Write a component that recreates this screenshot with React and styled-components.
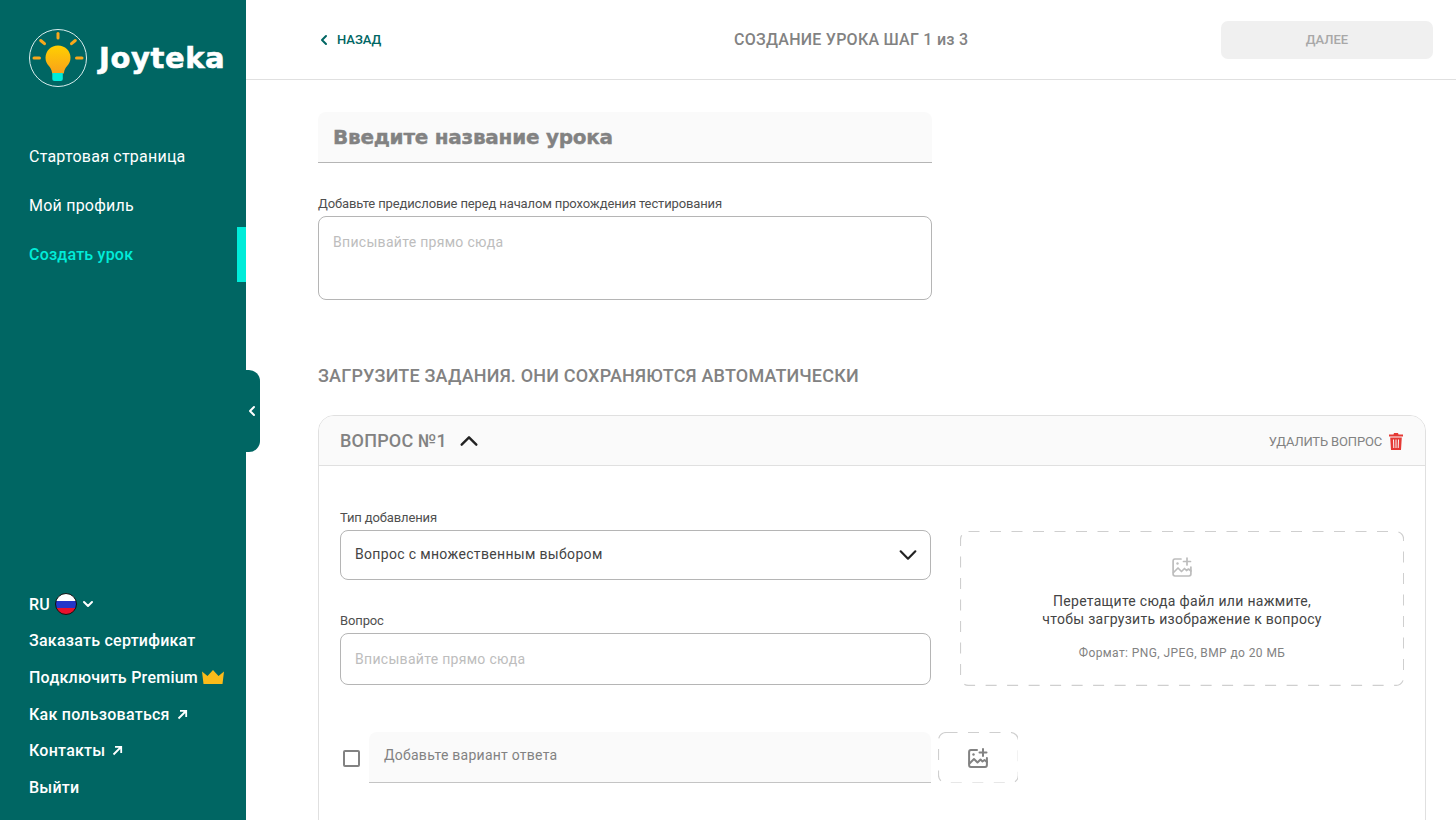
import React from 'react';
import styled, { createGlobalStyle } from 'styled-components';

const Global = createGlobalStyle`
  html, body { margin: 0; padding: 0; height: 100%; overflow: hidden; background: #fff; }
  body { font-family: Roboto, 'Liberation Sans', sans-serif; }
  * { box-sizing: border-box; }
`;

const Page = styled.div`
  display: flex;
  width: 1456px;
  height: 820px;
  overflow: hidden;
`;

const Sidebar = styled.aside`
  position: relative;
  flex: 0 0 246px;
  height: 820px;
  background: #006663;
  display: flex;
  flex-direction: column;
`;

const LogoRow = styled.div`
  display: flex;
  align-items: center;
  gap: 10px;
  padding: 29px 0 0 29px;
  height: 88px;
`;

const LogoText = styled.span`
  font-family: 'DejaVu Sans', sans-serif;
  font-weight: 700;
  font-size: 29px;
  line-height: 32px;
  color: #fff;
  letter-spacing: 0.6px;
  -webkit-text-stroke: 0.6px #fff;
  margin-top: -1px;
`;

const Nav = styled.nav`
  margin-top: 41px;
  display: flex;
  flex-direction: column;
`;

const NavItem = styled.a`
  position: relative;
  display: flex;
  align-items: center;
  height: 55px;
  margin-bottom: -6px;
  padding-left: 29px;
  font-size: 16px;
  letter-spacing: 0.22px;
  font-weight: ${p => (p.$active ? 500 : 400)};
  color: ${p => (p.$active ? '#00ecd9' : '#fff')};
`;

const ActiveBar = styled.span`
  position: absolute;
  right: 0;
  top: 0;
  width: 9px;
  height: 55px;
  background: #00ecd9;
`;

const Toggle = styled.button`
  position: absolute;
  left: 246px;
  top: 370px;
  width: 14px;
  height: 82px;
  padding: 0;
  border: 0;
  border-radius: 0 11px 11px 0;
  background: #006663;
  display: flex;
  align-items: center;
  justify-content: flex-start;
`;

const Bottom = styled.div`
  margin-top: auto;
  padding: 0 0 14.5px 29px;
  display: flex;
  flex-direction: column;
`;

const BottomItem = styled.a`
  display: flex;
  align-items: center;
  height: 36.6px;
  font-size: 16px;
  font-weight: 500;
  letter-spacing: 0.25px;
  color: #fff;
  white-space: nowrap;
`;

const Main = styled.main`
  flex: 1;
  min-width: 0;
  display: flex;
  flex-direction: column;
`;

const TopBar = styled.header`
  position: relative;
  flex: 0 0 80px;
  border-bottom: 1px solid #e0e0e0;
  display: flex;
  align-items: center;
  justify-content: space-between;
  padding: 0 23px 0 72px;
`;

const BackLink = styled.a`
  display: flex;
  align-items: center;
  gap: 7px;
  font-size: 13px;
  font-weight: 500;
  color: #006663;
`;

const StepTitle = styled.div`
  position: absolute;
  left: 488px;
  top: 0;
  line-height: 79px;
  font-size: 16px;
  font-weight: 500;
  color: #828282;
  letter-spacing: 0.25px;
`;

const NextButton = styled.button`
  width: 212px;
  height: 38px;
  margin-top: 1px;
  padding: 0 0 2px;
  border: 0;
  border-radius: 7px;
  background: #f0f0f0;
  color: #a8a8a8;
  font: 500 13px Roboto, sans-serif;
`;

const Content = styled.div`
  padding: 32px 30px 0 72px;
`;

const TitleField = styled.div`
  width: 614px;
  height: 51px;
  background: #fafafa;
  border-bottom: 1px solid #b5b5b5;
  border-radius: 8px 8px 0 0;
  padding-left: 15px;
  display: flex;
  align-items: center;
  font-family: 'DejaVu Sans', sans-serif;
  font-weight: 700;
  font-size: 20px;
  color: #828282;
  letter-spacing: -0.25px;
  -webkit-text-stroke: 0.4px #828282;
`;

const Label = styled.div`
  font-size: 13px;
  line-height: 16px;
  color: #4f4f4f;
  letter-spacing: -0.13px;
  margin-top: ${p => p.$mt || '0'};
`;

const Box = styled.div`
  width: ${p => p.$width || '100%'};
  height: ${p => p.$height};
  margin-top: ${p => p.$mt || '0'};
  border: 1px solid #b5b5b5;
  border-radius: 8px;
  padding: ${p => p.$pad || '0 14px'};
  display: flex;
  align-items: ${p => (p.$top ? 'flex-start' : 'center')};
  justify-content: space-between;
  font-size: 14px;
  color: ${p => (p.$dark ? '#444' : '#bdbdbd')};
  letter-spacing: ${p => (p.$dark ? '0.33px' : '0.3px')};
`;

const SectionTitle = styled.h2`
  margin: 65px 0 0;
  font-size: 18px;
  line-height: 21px;
  font-weight: 500;
  color: #828282;
  letter-spacing: 0.18px;
`;

const Card = styled.section`
  margin-top: 29px;
  width: 1108px;
  height: 480px;
  border: 1px solid #e0e0e0;
  border-radius: 16px;
  overflow: hidden;
`;

const CardHead = styled.div`
  height: 50px;
  background: #fafafa;
  border-bottom: 1px solid #e0e0e0;
  display: flex;
  align-items: center;
  padding: 0 22px 0 21px;
`;

const QuestionTitle = styled.div`
  font-size: 18px;
  font-weight: 500;
  color: #828282;
  letter-spacing: 0.2px;
  margin-right: 11px;
`;

const DeleteBtn = styled.div`
  margin-left: auto;
  padding-top: 1px;
  display: flex;
  align-items: center;
  gap: 7px;
  font-size: 13px;
  color: #828282;
  letter-spacing: -0.17px;
`;

const CardBody = styled.div`
  padding: 44px 21px 0;
`;

const FormGrid = styled.div`
  display: grid;
  grid-template-columns: 591px 444px;
  column-gap: 29px;
`;

const FieldColumn = styled.div`
  display: flex;
  flex-direction: column;
`;

const DropZone = styled.div`
  margin-top: 21px;
  height: 155px;
  border-radius: 8px;
  display: flex;
  flex-direction: column;
  align-items: center;
  position: relative;
  padding-top: 26px;
`;

const DashedFrame = styled.svg`
  position: absolute;
  inset: 0;
  width: 100%;
  height: 100%;
`;

const DropText = styled.div`
  margin-top: 15px;
  font-size: 14px;
  line-height: 18px;
  color: #444;
  text-align: center;
  letter-spacing: 0.3px;
`;

const DropHint = styled.div`
  margin-top: 18px;
  font-size: 12px;
  line-height: 14px;
  color: #828282;
  letter-spacing: 0.4px;
`;

const AnswerRow = styled.div`
  margin-top: 46px;
  display: flex;
  align-items: center;
`;

const CheckBox = styled.span`
  width: 17px;
  height: 17px;
  margin: 1px 9px 0 3px;
  border: 2px solid #828282;
  border-radius: 2px;
`;

const AnswerField = styled.div`
  width: 562px;
  height: 51px;
  background: #fafafa;
  border-bottom: 1px solid #c4c4c4;
  border-radius: 8px 8px 0 0;
  padding: 0 15px 4px;
  display: flex;
  align-items: center;
  font-size: 14px;
  color: #828282;
  letter-spacing: 0.25px;
`;

const AddImage = styled.div`
  position: relative;
  width: 80px;
  height: 51px;
  margin-left: 7px;
  display: flex;
  align-items: center;
  justify-content: center;
`;

const SelectArrow = styled.span`
  display: flex;
  margin-right: -3px;
`;

const BoxText = styled.span`
  margin-top: -3px;
`;

function Logo() {
  return (
    <svg width="60" height="60" viewBox="0 0 60 60">
      <defs>
        <linearGradient id="bulb" x1="0" y1="0" x2="0" y2="1">
          <stop offset="0" stopColor="#ffd000" />
          <stop offset="1" stopColor="#f9a11b" />
        </linearGradient>
      </defs>
      <circle cx="29" cy="29" r="28.5" fill="none" stroke="#d9eeee" strokeWidth="1" />
      <path d="M29 16.5c-7 0-12.5 5.4-12.5 12.3 0 3.5 1.3 6 3.4 8.3 1.5 1.7 2.6 3.4 3 5.9l.3 1.5h11.6l.3-1.5c.4-2.5 1.5-4.2 3-5.9 2.1-2.3 3.4-4.8 3.4-8.3 0-6.9-5.5-12.3-12.5-12.300z" fill="url(#bulb)" />
      <path d="M23.5 49v-6h10.5v6q0 2-2 2h-6.5q-2 0-2-2z" fill="#00ecd9" transform="translate(-.2 1)" />
      <g stroke="#f9a81b" strokeWidth="3" strokeLinecap="round">
        <path d="M29 4.5V9" />
        <path d="M11.7 11.5l3.8 3.2" />
        <path d="M46.3 11.5l-3.8 3.2" />
        <path d="M5 29h5.5" />
        <path d="M47.5 29H53" />
      </g>
    </svg>
  );
}

function Flag() {
  return (
    <svg width="22" height="22" viewBox="0 0 22 22" style={{ margin: '0 5px 0 5px' }}>
      <clipPath id="flag"><circle cx="11" cy="11" r="10.5" /></clipPath>
      <g clipPath="url(#flag)">
        <rect width="22" height="8" fill="#fff" />
        <rect y="8" width="22" height="7" fill="#2436c9" />
        <rect y="15" width="22" height="7" fill="#e8112d" />
      </g>
      <circle cx="11" cy="11" r="10.5" fill="none" stroke="#111" />
    </svg>
  );
}

function Chevron({ dir = 'down', size = 12, color = '#fff', width = 2 }) {
  const paths = {
    down: 'M2 4l4 4 4-4',
    up: 'M2 8l4-4 4 4',
    left: 'M8 2L4 6l4 4',
  };
  return (
    <svg width={size} height={size} viewBox="0 0 12 12" fill="none" stroke={color} strokeWidth={width} strokeLinecap="round" strokeLinejoin="round">
      <path d={paths[dir]} />
    </svg>
  );
}

function ArrowUpRight() {
  return (
    <svg width="11" height="11" viewBox="0 0 11 11" fill="none" stroke="#fff" strokeWidth="1.8" style={{ marginLeft: 7 }}>
      <path d="M1.5 9.5L9 2M3 1.8h6.2V8" />
    </svg>
  );
}

function Crown() {
  return (
    <svg width="22" height="14" viewBox="0 0 22 14" style={{ marginLeft: 4 }}>
      <path d="M0 1.5L5.5 6 11 0l5.5 6L22 1.5 20.5 14h-19z" fill="#fbbb1a" />
    </svg>
  );
}

function Trash() {
  return (
    <svg width="14" height="17" viewBox="0 0 14 17">
      <path d="M5 0h4l.5 1.5H14v2H0v-2h4.5z" fill="#e53935" />
      <path d="M1.2 4.5h11.6L12 17H2zM4 6.5l.3 8.5h1L5 6.5zm2.500 0V15h1V6.500zM9 6.500L8.700 15h1l.3-8.500z" fill="#e53935" fillRule="evenodd" />
    </svg>
  );
}

function ImageAdd({ color, size = 20, stroke = 1.7 }) {
  return (
    <svg width={size} height={size} viewBox="0 0 20 20" fill="none" stroke={color} strokeWidth={stroke} strokeLinecap="round" strokeLinejoin="round">
      <path d="M9 2H3a2 2 0 0 0-1.900 2v13a2 2 0 0 0 1.900 2h14a2 2 0 0 0 1.900-2V10" />
      <path d="M1.500 15.500l4.500-4.500 3.500 3.500 3-3 2 2 2-1.500 2.500 2" />
      <path d="M15 1v7M11.500 4.500h7" />
      <circle cx="5.500" cy="6.500" r="1.200" fill={color} stroke="none" />
    </svg>
  );
}

function Dashed({ radius, color = '#cfcfcf' }) {
  return (
    <DashedFrame>
      <rect x="0.5" y="0.5" width="99.800%" height="99.300%" rx={radius} fill="none" stroke={color} strokeWidth="1.2" strokeDasharray="11 10.500" />
    </DashedFrame>
  );
}

export default function App() {
  return (
    <Page>
      <Global />
      <Sidebar>
        <LogoRow>
          <Logo />
          <LogoText>Joyteka</LogoText>
        </LogoRow>
        <Nav>
          <NavItem>Стартовая страница</NavItem>
          <NavItem>Мой профиль</NavItem>
          <NavItem $active>
            Создать урок
            <ActiveBar />
          </NavItem>
        </Nav>
        <Toggle><Chevron dir="left" size={12} /></Toggle>
        <Bottom>
          <BottomItem>RU<Flag /><Chevron size={12} /></BottomItem>
          <BottomItem>Заказать сертификат</BottomItem>
          <BottomItem>Подключить Premium<Crown /></BottomItem>
          <BottomItem>Как пользоваться<ArrowUpRight /></BottomItem>
          <BottomItem>Контакты<ArrowUpRight /></BottomItem>
          <BottomItem>Выйти</BottomItem>
        </Bottom>
      </Sidebar>
      <Main>
        <TopBar>
          <BackLink><Chevron dir="left" size={12} color="#006663" />НАЗАД</BackLink>
          <StepTitle>СОЗДАНИЕ УРОКА ШАГ 1 из 3</StepTitle>
          <NextButton>ДАЛЕЕ</NextButton>
        </TopBar>
        <Content>
          <TitleField>Введите название урока</TitleField>
          <Label $mt="33px">Добавьте предисловие перед началом прохождения тестирования</Label>
          <Box $width="614px" $height="84px" $mt="4px" $top $pad="17px 14px 0">Вписывайте прямо сюда</Box>
          <SectionTitle>ЗАГРУЗИТЕ ЗАДАНИЯ. ОНИ СОХРАНЯЮТСЯ АВТОМАТИЧЕСКИ</SectionTitle>
          <Card>
            <CardHead>
              <QuestionTitle>ВОПРОС №1</QuestionTitle>
              <Chevron dir="up" size={22} color="#222" width={1.3} />
              <DeleteBtn>УДАЛИТЬ ВОПРОС<Trash /></DeleteBtn>
            </CardHead>
            <CardBody>
              <FormGrid>
                <FieldColumn>
                  <Label>Тип добавления</Label>
                  <Box $height="50px" $mt="4px" $dark>
                    <BoxText>Вопрос с множественным выбором</BoxText>
                    <SelectArrow><Chevron size={22} color="#222" width={1.2} /></SelectArrow>
                  </Box>
                  <Label $mt="33px">Вопрос</Label>
                  <Box $height="52px" $mt="4px">Вписывайте прямо сюда</Box>
                </FieldColumn>
                <DropZone>
                  <Dashed radius={8} />
                  <ImageAdd color="#bdbdbd" />
                  <DropText>Перетащите сюда файл или нажмите,<br />чтобы загрузить изображение к вопросу</DropText>
                  <DropHint>Формат: PNG, JPEG, BMP до 20 МБ</DropHint>
                </DropZone>
              </FormGrid>
              <AnswerRow>
                <CheckBox />
                <AnswerField>Добавьте вариант ответа</AnswerField>
                <AddImage>
                  <Dashed radius={8} />
                  <ImageAdd color="#828282" stroke={2} />
                </AddImage>
              </AnswerRow>
            </CardBody>
          </Card>
        </Content>
      </Main>
    </Page>
  );
}
